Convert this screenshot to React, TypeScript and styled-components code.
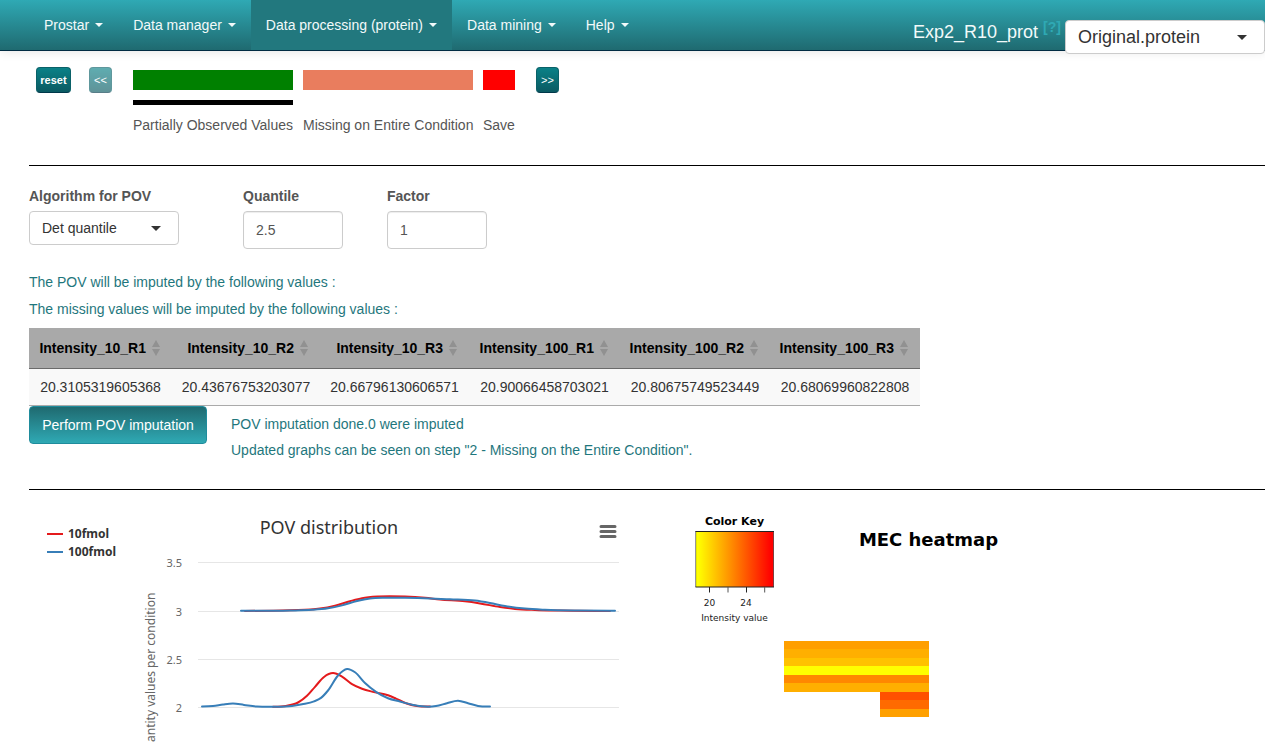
import React from 'react';
import styled, { createGlobalStyle } from 'styled-components';

const SANS = '"Liberation Sans", Arial, sans-serif';
const CHART_FONT = '"Noto Sans", sans-serif';
const PLOT_FONT = '"DejaVu Sans", sans-serif';

const GlobalStyle = createGlobalStyle`
  * { box-sizing: border-box; }
  body {
    margin: 0;
    background: #fff;
    color: #555;
    font-family: ${SANS};
    font-size: 14px;
    line-height: 20px;
  }
  button, input, select { font-family: inherit; margin: 0; }
`;

const Header = styled.header`
  display: flex;
  justify-content: space-between;
  height: 51px;
  padding-left: 29px;
  border-bottom: 1px solid #002b42;
  background: linear-gradient(#2fa9b4, #1f6a70);
  box-shadow: 0 1px 10px rgba(0, 0, 0, 0.1);
`;

const Nav = styled.nav`
  display: flex;
`;

const NavLink = styled.a<{ $active?: boolean }>`
  display: flex;
  align-items: center;
  gap: 6px;
  height: 50px;
  padding: 0 15px;
  color: #f2fafa;
  text-decoration: none;
  white-space: nowrap;
  background: ${(p) => (p.$active ? '#22787e' : 'transparent')};
`;

const NavCaret = styled.span`
  border-top: 4px solid;
  border-left: 4px solid transparent;
  border-right: 4px solid transparent;
`;

const DatasetArea = styled.div`
  display: flex;
  align-items: flex-start;
  padding-top: 20px;
  font-size: 18px;
`;

const DatasetName = styled.label`
  color: #f2fafa;
  line-height: 24px;
`;

const HelpLink = styled.a`
  margin: 0 4px 0 5px;
  color: #2fa9b4;
  font-size: 14px;
  font-weight: bold;
  line-height: 14px;
  text-decoration: none;
`;

const SelectBox = styled.div<{ $width: number; $inset: number }>`
  display: grid;
  align-items: center;
  width: ${(p) => p.$width}px;
  & > * { grid-area: 1 / 1; }
  & > svg {
    justify-self: end;
    margin-right: ${(p) => p.$inset}px;
    pointer-events: none;
  }
`;

const Select = styled.select<{ $size: number }>`
  appearance: none;
  width: 100%;
  height: 34px;
  padding: 0 12px;
  border: 1px solid #ccc;
  border-radius: 4px;
  background: #fff;
  color: #333;
  font-size: ${(p) => p.$size}px;
`;

const Main = styled.main`
  padding-left: 29px;
`;

const Steps = styled.section`
  display: flex;
  align-items: flex-start;
  height: 115px;
  padding: 16px 0 0 7px;
  border-bottom: 1px solid #000;
`;

const StepButton = styled.button<{ $wide?: boolean }>`
  width: ${(p) => (p.$wide ? 35 : 23)}px;
  height: 26px;
  padding: 0;
  border: 1px solid #0a6168;
  border-bottom-color: #00384a;
  border-radius: 4px;
  background: linear-gradient(#0a8187, #0b5a62);
  color: #fff;
  font-size: 11px;
  font-weight: ${(p) => (p.$wide ? 'bold' : 'normal')};
  line-height: 16px;
  &:disabled { opacity: 0.65; }
`;

const StepGap = styled.span`
  width: 18px;
`;

const StepList = styled.ol`
  display: grid;
  grid-template-columns: 160px 170px 32px;
  column-gap: 10px;
  margin: 3px 21px 0;
  padding: 0;
  list-style: none;
`;

const Step = styled.li<{ $color: string; $current?: boolean }>`
  white-space: nowrap;
  &::before {
    content: '';
    display: block;
    height: 20px;
    margin-bottom: 10px;
    background: ${(p) => p.$color};
  }
  & > span {
    display: block;
    padding-top: 10px;
    border-top: 5px solid ${(p) => (p.$current ? '#000' : 'transparent')};
  }
`;

const Controls = styled.form`
  display: grid;
  grid-template-columns: 170px 100px 100px;
  column-gap: 44px;
  align-items: start;
  margin-top: 20px;
`;

const Field = styled.div`
  display: flex;
  flex-direction: column;
  gap: 5px;
  & > label { font-weight: bold; }
`;

const NumberInput = styled.input`
  width: 100%;
  height: 38px;
  padding: 0 12px;
  border: 1px solid #ccc;
  border-radius: 4px;
  box-shadow: inset 0 1px 1px rgba(0, 0, 0, 0.075);
  color: #555;
  font-size: 14px;
`;

const Note = styled.p`
  margin: 0 0 7px;
  color: #1f777d;
`;

const Notes = styled.div`
  margin-top: 23px;
  padding-bottom: 2px;
`;

const ValueTable = styled.table`
  width: 891px;
  table-layout: fixed;
  border-collapse: separate;
  border-spacing: 0;
  border-bottom: 1px solid #aaa;
`;

const HeadCell = styled.th<{ $width: number }>`
  width: ${(p) => p.$width}px;
  height: 41px;
  padding: 0 12px 0 0;
  border-bottom: 1px solid #6a6a6a;
  background: #a9a9a9;
  color: #000;
  white-space: nowrap;
`;

const HeadContent = styled.div`
  display: flex;
  justify-content: flex-end;
  align-items: center;
  gap: 6px;
`;

const Cell = styled.td`
  height: 36px;
  padding: 0;
  background: #f9f9f9;
  color: #333;
  text-align: center;
`;

const RunRow = styled.section`
  display: flex;
  align-items: flex-start;
  gap: 24px;
  height: 84px;
  border-bottom: 1px solid #000;
`;

const RunButton = styled.button`
  height: 38px;
  width: 178px;
  padding: 0;
  border: 1px solid #1f8c9c;
  border-radius: 4px;
  background: linear-gradient(#1f6a70, #2fa9b4);
  color: #fff;
  font-size: 14px;
`;

const RunStatus = styled.div`
  padding-top: 8px;
  & > p { margin-bottom: 6px; }
`;

const Charts = styled.section`
  display: flex;
  overflow: hidden;
`;

const ChartFrame = styled.figure`
  position: relative;
  flex: none;
  margin: 0;
  & > svg { display: block; }
`;

const MenuButton = styled.button`
  position: absolute;
  top: 30px;
  right: 8px;
  width: 26px;
  height: 24px;
  padding: 0;
  border: 0;
  background: none;
  & > svg { display: block; margin: auto; }
`;

type Point = [number, number];

// Cubic Hermite curve through the points, with slopes weighted by x distance.
function smooth(points: Point[]): string {
  const last = points.length - 1;
  const slope = (i: number) => {
    if (i === 0 || i === last) return 0;
    const [x0, y0] = points[i - 1];
    const [x1, y1] = points[i];
    const [x2, y2] = points[i + 1];
    const h0 = x1 - x0;
    const h1 = x2 - x1;
    return (((y1 - y0) / h0) * h1 + ((y2 - y1) / h1) * h0) / (h0 + h1);
  };
  let d = `M${points[0][0]} ${points[0][1]}`;
  for (let i = 0; i < last; i++) {
    const [x0, y0] = points[i];
    const [x1, y1] = points[i + 1];
    const t = (x1 - x0) / 3;
    d += ` C${x0 + t} ${y0 + slope(i) * t} ${x1 - t} ${y1 - slope(i + 1) * t} ${x1} ${y1}`;
  }
  return d;
}

const RED = '#e41a1c';
const BLUE = '#377eb8';

const curves: { color: string; points: Point[] }[] = [
  { color: RED, points: [[245, 610.9], [290, 610.2], [320, 608.6], [335, 605.6], [350, 601.2], [362, 598.2], [378, 596.5], [405, 596.5], [425, 597.8], [440, 599.5], [465, 601.3], [480, 603.4], [500, 607], [515, 608.9], [535, 610], [560, 610.6], [610, 611]] },
  { color: BLUE, points: [[241, 610.8], [290, 610.5], [312, 609.8], [328, 608.3], [342, 605.4], [357, 601], [370, 598.5], [385, 597.7], [405, 597.8], [430, 598.4], [450, 599.3], [475, 600.6], [490, 603], [505, 606], [525, 608.6], [545, 609.8], [580, 610.6], [615, 610.8]] },
  { color: RED, points: [[273, 706.7], [286, 706], [298, 702.5], [307, 695.8], [315, 686.8], [324, 677], [333, 673.1], [342, 676.6], [352, 684.2], [362, 688.8], [374, 692.1], [388, 695.3], [396, 698.6], [406, 703.2], [417, 706], [430, 706.6]] },
  { color: BLUE, points: [[202, 706.5], [213, 706.1], [223, 704.5], [233, 703.5], [244, 704.9], [257, 706.5], [275, 706.8], [292, 705.9], [302, 704.2], [314, 701.4], [321, 697.9], [328, 690.5], [338, 675.5], [347, 669], [355, 672.3], [365, 683], [376, 691.8], [388, 698.2], [400, 701.5], [412, 704.8], [425, 706.6], [436, 706.1], [447, 703.2], [458, 700.7], [468, 703.2], [478, 706], [490, 706.6]] },
];

const gridLines = [
  { y: 562.5, label: '3.5' },
  { y: 611.5, label: '3' },
  { y: 659.5, label: '2.5' },
  { y: 707.5, label: '2' },
];

const legend = [
  { y: 534, color: RED, label: '10fmol' },
  { y: 552, color: BLUE, label: '100fmol' },
];

function DensityChart() {
  return (
    <ChartFrame>
      <svg width="600" height="253" viewBox="29 490 600 253" fontFamily={CHART_FONT} role="img" aria-label="POV distribution">
        {legend.map((l) => (
          <g key={l.label}>
            <path d={`M47 ${l.y}h16`} stroke={l.color} strokeWidth="2" />
            <text x="68" y={l.y + 4} fontSize="12" fontWeight="bold" fill="#333">{l.label}</text>
          </g>
        ))}
        <text x="329" y="534" fontSize="18" fill="#333" textAnchor="middle">POV distribution</text>
        {gridLines.map((g) => (
          <g key={g.label}>
            <path d={`M198 ${g.y}H619`} stroke="#e6e6e6" />
            <text x="182" y={g.y + 4} fontSize="11" fill="#666" textAnchor="end">{g.label}</text>
          </g>
        ))}
        <text transform="translate(155 742) rotate(-90)" fontSize="12" fill="#666">antity values per condition</text>
        {curves.map((c, i) => (
          <path key={i} d={smooth(c.points)} fill="none" stroke={c.color} strokeWidth="2" strokeLinecap="round" />
        ))}
      </svg>
      <MenuButton type="button" aria-label="Chart menu">
        <svg width="18" height="14" viewBox="0 0 18 14">
          <path d="M2 1.5h14M2 6.5h14M2 11.5h14" stroke="#666" strokeWidth="3" strokeLinecap="round" />
        </svg>
      </MenuButton>
    </ChartFrame>
  );
}

const heatRows = [
  { x: 784, y: 641, h: 8, color: '#ff9f00' },
  { x: 784, y: 649, h: 9, color: '#ffaf00' },
  { x: 784, y: 658, h: 8, color: '#ffc200' },
  { x: 784, y: 666, h: 9, color: '#ffff00' },
  { x: 784, y: 675, h: 8, color: '#ff8800' },
  { x: 784, y: 683, h: 9, color: '#ffaf00' },
  { x: 880, y: 692, h: 8, color: '#ff5000' },
  { x: 880, y: 700, h: 9, color: '#ff6a00' },
  { x: 880, y: 709, h: 8, color: '#ffa000' },
];

function Heatmap() {
  return (
    <ChartFrame>
      <svg width="600" height="253" viewBox="629 490 600 253" fontFamily={PLOT_FONT} role="img" aria-label="MEC heatmap">
        <defs>
          <linearGradient id="key">
            <stop offset="0.03" stopColor="#ff0" />
            <stop offset="0.5" stopColor="#ff8000" />
            <stop offset="0.97" stopColor="#f00" />
          </linearGradient>
        </defs>
        <text x="734.5" y="525" fontSize="11" fontWeight="bold" textAnchor="middle">Color Key</text>
        <rect x="696" y="531.5" width="77.5" height="55.5" fill="url(#key)" />
        <path d="M695.7 531V587M773.5 531V587" stroke="#000" strokeOpacity="0.5" />
        <path d="M695.5 531.5H774M695.5 587H774" stroke="#222" />
        <path d="M709.5 587v5.5M746.5 587v5.5" stroke="#222" />
        <path d="M728 587v5.5M764.7 587v5.5" stroke="#555" />
        <text x="709.5" y="606" fontSize="9" fill="#222" textAnchor="middle">20</text>
        <text x="746" y="606" fontSize="9" fill="#222" textAnchor="middle">24</text>
        <text x="734.5" y="621" fontSize="9" fill="#222" textAnchor="middle">Intensity value</text>
        <text x="928.5" y="546" fontSize="18" fontWeight="bold" textAnchor="middle">MEC heatmap</text>
        {heatRows.map((r) => (
          <rect key={r.y} x={r.x} y={r.y} width={929 - r.x} height={r.h} fill={r.color} shapeRendering="crispEdges" />
        ))}
      </svg>
    </ChartFrame>
  );
}

const SelectArrow = () => (
  <svg width="10" height="5" viewBox="0 0 10 5" aria-hidden="true">
    <path d="M0 0h10L5 5z" fill="#333" />
  </svg>
);

const SortIcon = () => (
  <svg width="8" height="16" viewBox="0 0 8 16" aria-hidden="true">
    <path d="M0 7L4 0l4 7zM0 9h8l-4 7z" fill="#919191" />
  </svg>
);

const menus = ['Prostar', 'Data manager', 'Data processing (protein)', 'Data mining', 'Help'];

const columns = [
  { name: 'Intensity_10_R1', value: '20.3105319605368', width: 143 },
  { name: 'Intensity_10_R2', value: '20.43676753203077', width: 148 },
  { name: 'Intensity_10_R3', value: '20.66796130606571', width: 149 },
  { name: 'Intensity_100_R1', value: '20.90066458703021', width: 151 },
  { name: 'Intensity_100_R2', value: '20.80675749523449', width: 150 },
  { name: 'Intensity_100_R3', value: '20.68069960822808', width: 150 },
];

export default function App() {
  return (
    <>
      <GlobalStyle />
      <Header>
        <Nav>
          {menus.map((m, i) => (
            <NavLink key={m} href="#" $active={i === 2}>
              {m}
              <NavCaret />
            </NavLink>
          ))}
        </Nav>
        <DatasetArea>
          <DatasetName htmlFor="dataset">Exp2_R10_prot</DatasetName>
          <HelpLink href="#">[?]</HelpLink>
          <SelectBox $width={200} $inset={18}>
            <Select id="dataset" $size={18}>
              <option>Original.protein</option>
            </Select>
            <SelectArrow />
          </SelectBox>
        </DatasetArea>
      </Header>
      <Main>
        <Steps>
          <StepButton type="button" $wide>reset</StepButton>
          <StepGap />
          <StepButton type="button" disabled>&lt;&lt;</StepButton>
          <StepList>
            <Step $color="#008000" $current><span>Partially Observed Values</span></Step>
            <Step $color="#e97d5e"><span>Missing on Entire Condition</span></Step>
            <Step $color="#ff0000"><span>Save</span></Step>
          </StepList>
          <StepButton type="button">&gt;&gt;</StepButton>
        </Steps>
        <Controls>
          <Field>
            <label htmlFor="algorithm">Algorithm for POV</label>
            <SelectBox $width={150} $inset={18}>
              <Select id="algorithm" $size={14}>
                <option>Det quantile</option>
              </Select>
              <SelectArrow />
            </SelectBox>
          </Field>
          <Field>
            <label htmlFor="quantile">Quantile</label>
            <NumberInput id="quantile" defaultValue="2.5" />
          </Field>
          <Field>
            <label htmlFor="factor">Factor</label>
            <NumberInput id="factor" defaultValue="1" />
          </Field>
        </Controls>
        <Notes>
          <Note>The POV will be imputed by the following values :</Note>
          <Note>The missing values will be imputed by the following values :</Note>
        </Notes>
        <ValueTable>
          <thead>
            <tr>
              {columns.map((c) => (
                <HeadCell key={c.name} $width={c.width} scope="col">
                  <HeadContent>
                    {c.name}
                    <SortIcon />
                  </HeadContent>
                </HeadCell>
              ))}
            </tr>
          </thead>
          <tbody>
            <tr>
              {columns.map((c) => (
                <Cell key={c.name}>{c.value}</Cell>
              ))}
            </tr>
          </tbody>
        </ValueTable>
        <RunRow>
          <RunButton type="button">Perform POV imputation</RunButton>
          <RunStatus>
            <Note>POV imputation done.0 were imputed</Note>
            <Note>Updated graphs can be seen on step "2 - Missing on the Entire Condition".</Note>
          </RunStatus>
        </RunRow>
        <Charts>
          <DensityChart />
          <Heatmap />
        </Charts>
      </Main>
    </>
  );
}
